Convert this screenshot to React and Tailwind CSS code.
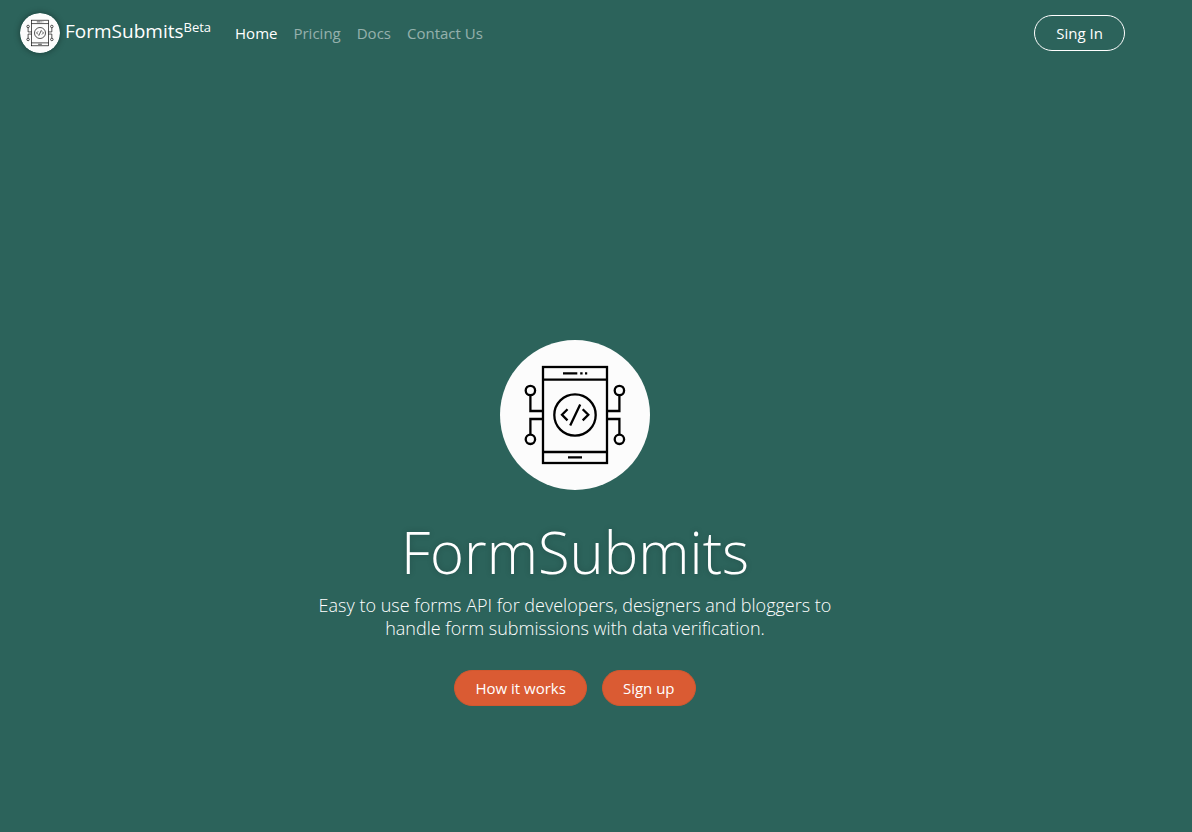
import React from "react";

const navLinks = [
  { name: "Home", active: true },
  { name: "Pricing" },
  { name: "Docs" },
  { name: "Contact Us" },
];

const Logo = ({ className, strokeWidth = 2.3 }) => {
  return (
    <svg
      viewBox="0 0 150 150"
      className={className}
      fill="none"
      stroke="#000"
      strokeWidth={strokeWidth}
      aria-hidden="true"
    >
      <circle cx="75" cy="75" r="75" fill="#fcfcfc" stroke="none" />
      <rect x="43" y="27" width="64" height="96" />
      <path d="M43 39.7h64M43 112h64" />
      <path d="M63 33.4h14.3M80.2 33.4h2.4M85 33.4h2.2M68 117.3h14" />
      <circle cx="75" cy="75" r="20.7" />
      <path d="M67.5 69.2L62 74.8l5.5 5.6M82.7 69.2l5.6 5.6-5.6 5.6M80.2 64.4L70.2 85.4" />
      <circle cx="30.4" cy="50.5" r="4.7" />
      <circle cx="30.4" cy="99.3" r="4.7" />
      <circle cx="119.4" cy="50.5" r="4.7" />
      <circle cx="119.4" cy="99.3" r="4.7" />
      <path d="M30.4 55.2V71H43M30.4 94.6V79H43M119.4 55.2V71H107M119.4 94.6V79H107" />
    </svg>
  );
};

const Navbar = () => {
  return (
    <header className="flex items-center justify-between pl-5 pr-[67px] h-[66px]">
      <div className="flex items-center">
        <a href="#" className="flex items-center gap-[5px] text-white">
          <Logo
            className="w-10 h-10 rounded-full shadow-[0_0_6px_rgba(0,0,0,0.4)]"
            strokeWidth={2.5}
          />
          <span className="text-[19px] leading-8 pb-1">
            FormSubmits
            <sup className="text-[13px] leading-none">Beta</sup>
          </span>
        </a>

        <nav className="flex gap-4 ml-6 text-[15px]">
          {navLinks.map((link) => (
            <a
              key={link.name}
              href="#"
              className={link.active ? "text-white" : "text-white/50"}
            >
              {link.name}
            </a>
          ))}
        </nav>
      </div>

      <button className="h-9 px-[21px] rounded-full border border-white text-white text-[15px]">
        Sing In
      </button>
    </header>
  );
};

const Hero = () => {
  return (
    <main className="flex flex-col items-center pt-[274px] pb-8 pr-[42px] text-center text-white">
      <Logo className="w-[150px] h-[150px]" />

      <h1 className="mt-6 text-[58px] leading-[76px] font-light [text-shadow:0_0_6px_rgba(0,0,0,0.2)]">
        FormSubmits
      </h1>

      <p className="mt-1 max-w-[540px] text-lg leading-[23px] font-light">
        Easy to use forms API for developers, designers and bloggers to handle
        form submissions with data verification.
      </p>

      <div className="flex gap-[15px] mt-[30px] text-[15px]">
        <button className="h-9 px-5 rounded-full border border-[#d2572e] bg-[#da5b33]">
          How it works
        </button>
        <button className="h-9 px-5 rounded-full border border-[#d2572e] bg-[#da5b33]">
          Sign up
        </button>
      </div>
    </main>
  );
};

const App = () => {
  return (
    <div className="min-h-screen bg-[#2c635b] font-['Open_Sans','Noto_Sans',sans-serif]">
      <Navbar />
      <Hero />
    </div>
  );
};

export default App;
